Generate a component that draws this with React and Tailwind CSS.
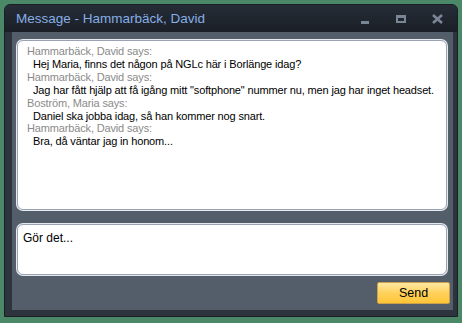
import React from 'react';

const messages = [
  { from: 'Hammarbäck, David', text: 'Hej Maria, finns det någon på NGLc här i Borlänge idag?' },
  { from: 'Hammarbäck, David', text: 'Jag har fått hjälp att få igång mitt "softphone" nummer nu, men jag har inget headset.' },
  { from: 'Boström, Maria', text: 'Daniel ska jobba idag, så han kommer nog snart.' },
  { from: 'Hammarbäck, David', text: 'Bra, då väntar jag in honom...' },
];

function App() {
  return (
    <div className="w-[462px] h-[323px] bg-[#4a8868] pl-[4px] pt-[4px] overflow-hidden font-['Liberation_Sans',Arial,sans-serif]">
      <div className="w-[454px] h-[313px] flex flex-col rounded-t-[6px] bg-[#2d343e] border border-[#1a1f26] overflow-hidden">
        {/* Title bar */}
        <div className="h-[27px] shrink-0 flex items-center bg-gradient-to-b from-[#262d37] to-[#1a1f27] pl-[11px] pr-[14px]">
          <span className="text-[13.5px] text-[#86aee6] leading-none">Message - Hammarbäck, David</span>
          <div className="ml-auto flex items-center">
            <div className="w-[8px] h-[3px] bg-[#7a8596] mt-[7px]" />
            <div className="ml-[27px] w-[10px] h-[8px] border-2 border-t-[3px] border-[#7a8596]" />
            <svg className="ml-[26px]" width="11" height="10" viewBox="0 0 11 10">
              <path d="M1 1 L10 9 M10 1 L1 9" stroke="#7a8596" strokeWidth="2.6" />
            </svg>
          </div>
        </div>

        {/* Content */}
        <div className="flex-1 flex ml-[7px] mr-[4px] mb-[6px]">
          <div className="flex-1 bg-[#545e6a] flex flex-col pl-[5px] pr-[6px] pt-[8px] pb-[6px]">
            <div className="h-[170px] bg-white rounded-[6px] border border-[#9aa2b3] shadow-[0_0_0_1px_#e6e9ef] pl-[9px] pt-[4px] text-[11px] leading-[12.9px] tracking-[-0.15px] whitespace-nowrap overflow-hidden">
              {messages.map((m, i) => (
                <div key={i}>
                  <div className="text-[#8a8a8a]">{m.from} says:</div>
                  <div className="text-black pl-[6px]">{m.text}</div>
                </div>
              ))}
            </div>
            <div className="mt-[14px] h-[51px] bg-white rounded-[6px] border border-[#9aa2b3] shadow-[0_0_0_1px_#e6e9ef] pl-[5px] pt-[4px] text-[12px] text-black">
              Gör det...
            </div>
            <div className="mt-auto flex justify-end">
              <button className="w-[73px] h-[22px] mr-[-3px] rounded-[2px] border border-[#caa14a] bg-gradient-to-b from-[#ffe9a0] via-[#ffd15a] to-[#ffc436] text-[12.5px] text-black">
                Send
              </button>
            </div>
          </div>
        </div>
      </div>
    </div>
  );
}

export default App;
